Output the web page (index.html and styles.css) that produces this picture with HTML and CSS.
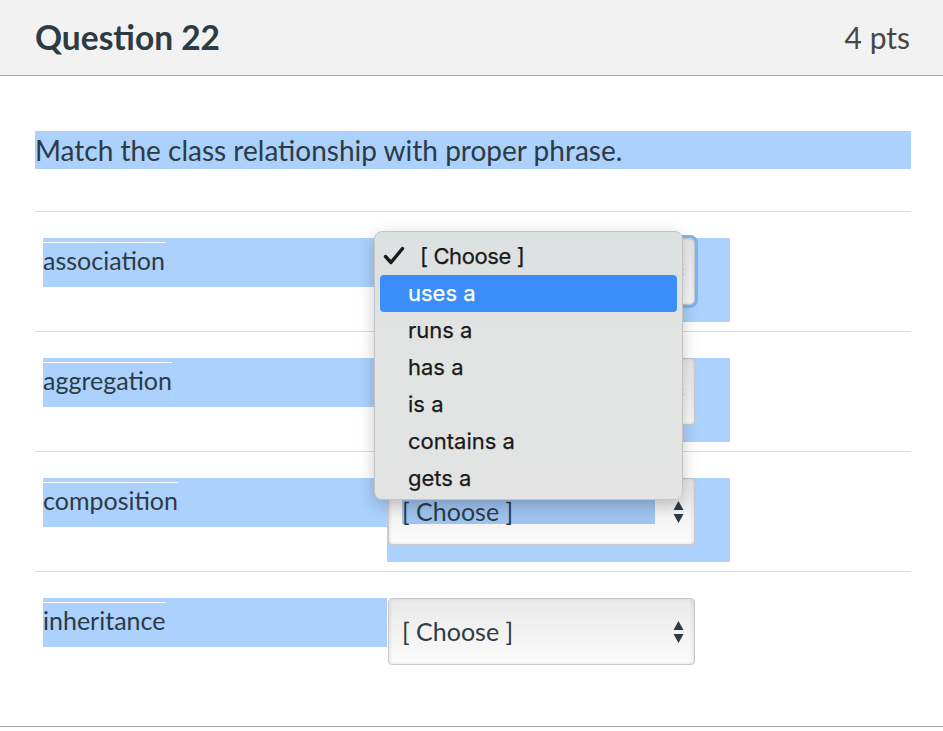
FILE: index.html
```html
<!DOCTYPE html>
<html>
<head>
<meta charset="utf-8">
<link rel="stylesheet" href="styles.css">
</head>
<body>
<div class="question">
  <div class="header">
    <h2 class="title">Question 22</h2>
    <div class="pts">4 pts</div>
  </div>
  <div class="qbody">
    <div class="prompt">Match the class relationship with proper phrase.</div>
    <div class="answers">
      <div class="row">
        <div class="label hl"><span class="label-text">association</span></div>
        <div class="select-wrap hl">
          <div class="select focused"><span class="sel-text">[ Choose ]</span><span class="arrows"><svg width="11" height="24" viewBox="0 0 11 24"><path d="M5.5 1 L10.5 10 L0.5 10 Z M0.5 14 L10.5 14 L5.5 23 Z" fill="#2d3b45"/></svg></span></div>
        </div>
      </div>
      <div class="row">
        <div class="label hl"><span class="label-text">aggregation</span></div>
        <div class="select-wrap hl">
          <div class="select"><span class="sel-text">[ Choose ]</span><span class="arrows"><svg width="11" height="24" viewBox="0 0 11 24"><path d="M5.5 1 L10.5 10 L0.5 10 Z M0.5 14 L10.5 14 L5.5 23 Z" fill="#2d3b45"/></svg></span></div>
        </div>
      </div>
      <div class="row">
        <div class="label hl"><span class="label-text">composition</span></div>
        <div class="select-wrap hl">
          <div class="select"><span class="sel-text sel-hl">[ Choose ]</span><span class="arrows"><svg width="11" height="24" viewBox="0 0 11 24"><path d="M5.5 1 L10.5 10 L0.5 10 Z M0.5 14 L10.5 14 L5.5 23 Z" fill="#2d3b45"/></svg></span></div>
        </div>
      </div>
      <div class="row last">
        <div class="label hl"><span class="label-text">inheritance</span></div>
        <div class="select-wrap">
          <div class="select"><span class="sel-text">[ Choose ]</span><span class="arrows"><svg width="11" height="24" viewBox="0 0 11 24"><path d="M5.5 1 L10.5 10 L0.5 10 Z M0.5 14 L10.5 14 L5.5 23 Z" fill="#2d3b45"/></svg></span></div>
        </div>
      </div>
    </div>
  </div>
  <div class="popup">
    <div class="opt checked"><svg class="check" width="22" height="22" viewBox="0 0 22 22"><path d="M2.5 11.5 L8 17.5 L19.5 3.5" fill="none" stroke="#1a1a1a" stroke-width="3.4" stroke-linecap="round" stroke-linejoin="round"/></svg><span>[ Choose ]</span></div>
    <div class="opt active">uses a</div>
    <div class="opt">runs a</div>
    <div class="opt">has a</div>
    <div class="opt">is a</div>
    <div class="opt">contains a</div>
    <div class="opt">gets a</div>
  </div>
</div>
</body>
</html>
```
FILE: styles.css
```css
html, body {
  margin: 0;
  padding: 0;
  background: #fff;
}
body {
  font-family: Lato, "Open Sans", sans-serif;
  color: #2d3b45;
}
.question {
  position: relative;
  width: 943px;
}
.header {
  height: 75px;
  background: #f2f2f2;
  border-bottom: 1px solid #a5a5a5;
  display: flex;
  align-items: center;
  justify-content: space-between;
  padding: 0 33px 0 35px;
}
.title {
  margin: 0;
  font-size: 33.5px;
  font-weight: 700;
  color: #2d3b45;
  position: relative;
  top: -1px;
}
.pts {
  font-size: 30px;
  color: #474747;
  position: relative;
  top: -1px;
}
.qbody {
  border-bottom: 1px solid #a5a5a5;
  padding: 55px 32px 0 35px;
}
.prompt {
  background: #abd1fc;
  height: 38px;
  line-height: 38px;
  font-size: 28px;
  margin-bottom: 42px;
}
.row {
  border-top: 1px solid #dcdcdc;
  padding: 26px 0 9px 8px;
  display: flex;
  align-items: flex-start;
}
.row.last {
  padding-bottom: 44px;
}
.hl {
  background: #abd1fc;
}
.label {
  width: 344px;
  height: 49px;
  padding-top: 4px;
  box-sizing: border-box;
}
.label-text {
  display: inline-block;
  border-top: 1px solid #fff;
  font-size: 25px;
  line-height: 34px;
}
.select-wrap {
  width: 343px;
  height: 84px;
}
.select {
  margin-left: 1px;
  width: 307px;
  height: 67px;
  box-sizing: border-box;
  border: 1px solid #c9c9c9;
  border-radius: 4px;
  background: linear-gradient(#e9e9e9, #fbfbfb);
  box-shadow: inset 2px 0 3px rgba(0,0,0,0.06), inset -2px 0 3px rgba(0,0,0,0.06);
  display: flex;
  align-items: center;
  justify-content: space-between;
  padding: 0 10px 0 13px;
}
.select.focused {
  outline: 3px solid #7fb2f6;
  outline-offset: 0;
  border-radius: 5px;
}
.sel-text {
  font-size: 25px;
  line-height: 25px;
}
.sel-hl {
  background: #9ec3ef;
  width: 253px;
}
.arrows {
  display: flex;
  align-items: center;
}
.arrows svg {
  display: block;
}
.popup {
  position: absolute;
  left: 374px;
  top: 231px;
  width: 309px;
  height: 269px;
  box-sizing: border-box;
  padding: 6px 5px 3px;
  border-radius: 8px;
  border: 1px solid #c4c4c4;
  background: linear-gradient(#dbe0e0 0%, #e2e3e3 40%, #e3e3e3 100%);
  box-shadow: 0 5px 16px rgba(0,0,0,0.22);
  font-family: Inter, "Liberation Sans", sans-serif;
  font-size: 22px;
  color: #1a1a1a;
  -webkit-text-stroke: 0.25px #1a1a1a;
}
.opt {
  height: 37px;
  line-height: 37px;
  padding-left: 28px;
  border-radius: 4px;
}
.opt.checked {
  position: relative;
  padding-left: 40px;
  letter-spacing: -0.4px;
}
.opt.checked .check {
  position: absolute;
  left: 3px;
  top: 7px;
}
.opt.active {
  background: #3b8ef9;
  color: #fff;
  -webkit-text-stroke: 0.25px #fff;
}
```
